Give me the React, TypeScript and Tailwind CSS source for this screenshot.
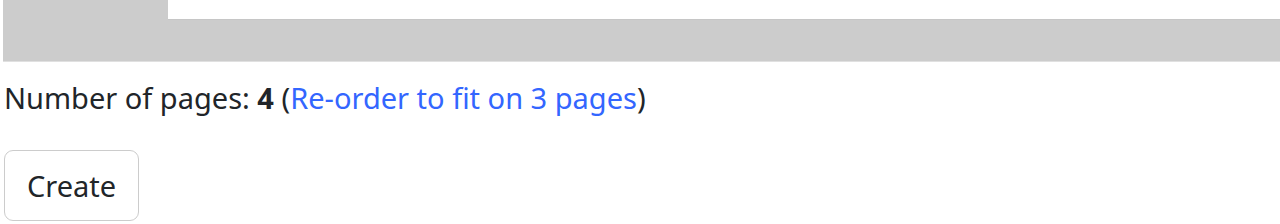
export default function App() {
  return (
    <div className="w-[1280px] h-[224px] overflow-hidden bg-white pl-[3px] text-[#212529]" style={{ fontFamily: '"Noto Sans", "Open Sans", sans-serif' }}>
      <div className="flex flex-col">
        <div className="flex h-[20px]">
          <div className="w-[165px] bg-[#cccccc]" />
          <div className="flex-1 border-b border-[#c6c6c6]" />
        </div>
        <div className="h-[42px] bg-[#cccccc] border-b border-[#e0e0e0]" />
      </div>
      <p className="mt-[14px] pl-[1px] text-[29px] leading-[44px]">
        Number of pages: <b className="font-bold">4</b> (<a className="text-[#3366ff]">Re-order to fit on 3 pages</a>)
      </p>
      <button className="mt-[30px] ml-[1px] w-[135px] h-[71px] border border-[#cccccc] rounded-[9px] bg-white text-[29px] text-[#212529]">
        Create
      </button>
    </div>
  );
}
